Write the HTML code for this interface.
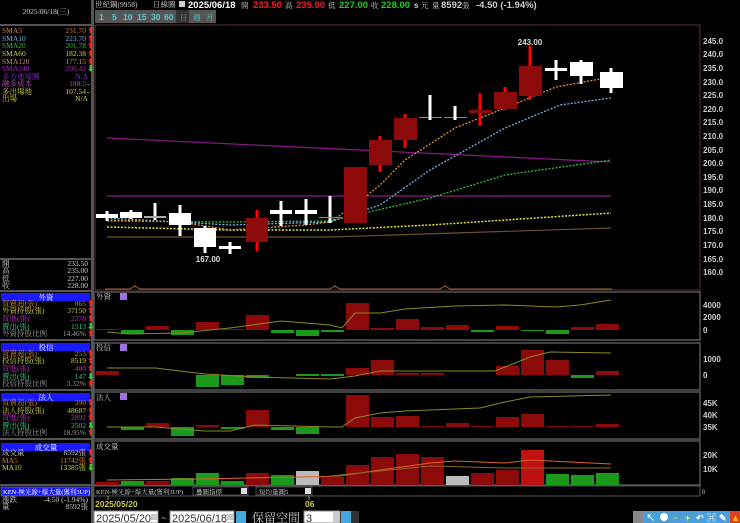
<!DOCTYPE html>
<html><head><meta charset="utf-8"><style>
html,body{margin:0;padding:0;background:#000;width:740px;height:523px;overflow:hidden}
svg{display:block}
text{font-family:"Liberation Sans","Noto Sans CJK TC",sans-serif}
.s{font-family:"Liberation Serif","Noto Serif CJK SC","Noto Sans CJK TC",serif;font-size:7.5px}
</style></head><body>
<svg width="740" height="523" viewBox="0 0 740 523" xmlns="http://www.w3.org/2000/svg">
<rect width="740" height="523" fill="#000"/>
<!-- left panel -->
<rect x="91" y="0" width="3" height="523" fill="#555"/>
<text x="46" y="14" fill="#ccc" class="s" text-anchor="middle">2025/06/18(三)</text>
<line x1="0" y1="25" x2="91" y2="25" stroke="#555" stroke-width="2"/>
<g class="s">
<text x="2" y="33" fill="#d08030" class="s">SMA5</text><text x="86" y="33" fill="#d08030" class="s" text-anchor="end">231.70</text><text x="87" y="33" fill="#f22" class="s">⬆</text>
<text x="2" y="41" fill="#70b0e0" class="s">SMA10</text><text x="86" y="41" fill="#70b0e0" class="s" text-anchor="end">223.70</text><text x="87" y="41" fill="#f22" class="s">⬆</text>
<text x="2" y="48" fill="#30c030" class="s">SMA20</text><text x="86" y="48" fill="#30c030" class="s" text-anchor="end">201.78</text><text x="87" y="48" fill="#f22" class="s">⬆</text>
<text x="2" y="56" fill="#d0d040" class="s">SMA60</text><text x="86" y="56" fill="#d0d040" class="s" text-anchor="end">182.38</text><text x="87" y="56" fill="#f22" class="s">⬆</text>
<text x="2" y="64" fill="#c09070" class="s">SMA120</text><text x="86" y="64" fill="#c09070" class="s" text-anchor="end">177.15</text><text x="87" y="64" fill="#f22" class="s">⬆</text>
<text x="2" y="71" fill="#b020c0" class="s">SMA240</text><text x="86" y="71" fill="#b020c0" class="s" text-anchor="end">200.42</text><text x="87" y="71" fill="#3c3" class="s">⬇</text>
<text x="2" y="79" fill="#8030c0" class="s">多方進場圖</text><text x="88" y="79" fill="#8030c0" class="s" text-anchor="end">N/A</text>
<text x="2" y="86" fill="#c050c0" class="s">融多成本</text><text x="86" y="86" fill="#c050c0" class="s" text-anchor="end">188.5</text><text x="87" y="86" fill="#ccc" class="s">-</text>
<text x="2" y="94" fill="#d0d040" class="s">多出場地</text><text x="86" y="94" fill="#d0d040" class="s" text-anchor="end">107.54</text><text x="87" y="94" fill="#ccc" class="s">-</text>
<text x="2" y="101" fill="#d0d040" class="s">出場</text><text x="88" y="101" fill="#d0d040" class="s" text-anchor="end">N/A</text>
</g>
<line x1="0" y1="259" x2="91" y2="259" stroke="#555" stroke-width="2"/>
<text x="2" y="266" fill="#ccc" class="s">開</text><text x="88" y="266" fill="#ccc" class="s" text-anchor="end">233.50</text>
<text x="2" y="273" fill="#ccc" class="s">高</text><text x="88" y="273" fill="#ccc" class="s" text-anchor="end">235.00</text>
<text x="2" y="281" fill="#ccc" class="s">低</text><text x="88" y="281" fill="#ccc" class="s" text-anchor="end">227.00</text>
<text x="2" y="288" fill="#ccc" class="s">收</text><text x="88" y="288" fill="#ccc" class="s" text-anchor="end">228.00</text>
<line x1="0" y1="291" x2="91" y2="291" stroke="#555" stroke-width="2"/>
<!-- sections -->
<rect x="1" y="293" width="89" height="8" fill="#1a1aff"/><text x="46" y="300" fill="#fff" class="s" text-anchor="middle">外資</text>
<text x="2" y="306" fill="#d08030" class="s">買賣超(張)</text><text x="86" y="306" fill="#d08030" class="s" text-anchor="end">865</text><text x="87" y="306" fill="#f22" class="s">⬆</text>
<text x="2" y="313" fill="#d0d040" class="s">外資持股(張)</text><text x="86" y="313" fill="#d0d040" class="s" text-anchor="end">37150</text><text x="87" y="313" fill="#f22" class="s">⬆</text>
<text x="2" y="321" fill="#c030c0" class="s">買進(張)</text><text x="86" y="321" fill="#c030c0" class="s" text-anchor="end">2378</text><text x="87" y="321" fill="#f22" class="s">⬆</text>
<text x="2" y="329" fill="#3c8" class="s">賣出(張)</text><text x="86" y="329" fill="#3c8" class="s" text-anchor="end">1513</text><text x="87" y="329" fill="#3c3" class="s">⬇</text>
<text x="2" y="336" fill="#999" class="s">外資持股比例</text><text x="86" y="336" fill="#999" class="s" text-anchor="end">14.46%</text><text x="87" y="336" fill="#f22" class="s">⬆</text>
<line x1="0" y1="340" x2="91" y2="340" stroke="#555" stroke-width="2"/>
<rect x="1" y="343" width="89" height="8" fill="#1a1aff"/><text x="46" y="350" fill="#fff" class="s" text-anchor="middle">投信</text>
<text x="2" y="356" fill="#d08030" class="s">買賣超(張)</text><text x="86" y="356" fill="#d08030" class="s" text-anchor="end">253</text><text x="87" y="356" fill="#f22" class="s">⬆</text>
<text x="2" y="363" fill="#d0d040" class="s">投信持股(張)</text><text x="86" y="363" fill="#d0d040" class="s" text-anchor="end">8519</text><text x="87" y="363" fill="#f22" class="s">⬆</text>
<text x="2" y="371" fill="#c030c0" class="s">買進(張)</text><text x="86" y="371" fill="#c030c0" class="s" text-anchor="end">400</text><text x="87" y="371" fill="#f22" class="s">⬆</text>
<text x="2" y="379" fill="#3c8" class="s">賣出(張)</text><text x="86" y="379" fill="#3c8" class="s" text-anchor="end">147</text><text x="87" y="379" fill="#3c3" class="s">⬇</text>
<text x="2" y="386" fill="#999" class="s">投信持股比例</text><text x="86" y="386" fill="#999" class="s" text-anchor="end">3.32%</text><text x="87" y="386" fill="#f22" class="s">⬆</text>
<line x1="0" y1="390" x2="91" y2="390" stroke="#555" stroke-width="2"/>
<rect x="1" y="393" width="89" height="8" fill="#1a1aff"/><text x="46" y="400" fill="#fff" class="s" text-anchor="middle">法人</text>
<text x="2" y="405" fill="#d08030" class="s">買賣超(張)</text><text x="86" y="405" fill="#d08030" class="s" text-anchor="end">390</text><text x="87" y="405" fill="#f22" class="s">⬆</text>
<text x="2" y="413" fill="#d0d040" class="s">法人持股(張)</text><text x="86" y="413" fill="#d0d040" class="s" text-anchor="end">48687</text><text x="87" y="413" fill="#f22" class="s">⬆</text>
<text x="2" y="420" fill="#c030c0" class="s">買進(張)</text><text x="86" y="420" fill="#c030c0" class="s" text-anchor="end">2892</text><text x="87" y="420" fill="#f22" class="s">⬆</text>
<text x="2" y="428" fill="#3c8" class="s">賣出(張)</text><text x="86" y="428" fill="#3c8" class="s" text-anchor="end">2502</text><text x="87" y="428" fill="#3c3" class="s">⬇</text>
<text x="2" y="435" fill="#999" class="s">法人持股比例</text><text x="86" y="435" fill="#999" class="s" text-anchor="end">18.95%</text><text x="87" y="435" fill="#f22" class="s">⬆</text>
<line x1="0" y1="439" x2="91" y2="439" stroke="#555" stroke-width="2"/>
<rect x="1" y="443" width="89" height="8" fill="#1a1aff"/><text x="46" y="450" fill="#fff" class="s" text-anchor="middle">成交量</text>
<text x="2" y="455" fill="#ccc" class="s">成交量</text><text x="86" y="455" fill="#ccc" class="s" text-anchor="end">8592張</text><text x="87" y="455" fill="#f22" class="s">⬆</text>
<text x="2" y="463" fill="#d08030" class="s">MA5</text><text x="86" y="463" fill="#d08030" class="s" text-anchor="end">11742張</text><text x="87" y="463" fill="#f22" class="s">⬆</text>
<text x="2" y="470" fill="#d0d040" class="s">MA10</text><text x="86" y="470" fill="#d0d040" class="s" text-anchor="end">13385張</text><text x="87" y="470" fill="#3c3" class="s">⬇</text>
<rect x="0" y="484" width="91" height="2" fill="#555"/>
<rect x="1" y="487" width="89" height="9" fill="#1a1aff" stroke="#88f" stroke-width="0.5"/><text x="3" y="494" fill="#fff" class="s" style="font-size:6.5px">KEN-極光線+爆大量(獲利3UP)</text>
<text x="2" y="502" fill="#ccc" class="s">漲跌</text><text x="88" y="502" fill="#ccc" class="s" text-anchor="end">-4.50 (-1.94%)</text>
<text x="2" y="509" fill="#ccc" class="s">量</text><text x="88" y="509" fill="#ccc" class="s" text-anchor="end">8592張</text>

<!-- top bar -->
<text x="95" y="7" fill="#ccc" class="s">世紀鋼(9958)</text>
<text x="153" y="7" fill="#ccc" class="s">日線圖</text>
<rect x="179" y="1" width="6" height="6" fill="#ccc"/>
<text x="188" y="8" fill="#fff" font-size="9.5" font-weight="bold">2025/06/18</text>
<text x="241" y="8" fill="#ccc" class="s">開</text><text x="253" y="8" fill="#e22" font-size="9.5" font-weight="bold">233.50</text>
<text x="285" y="8" fill="#ccc" class="s">高</text><text x="296" y="8" fill="#e22" font-size="9.5" font-weight="bold">235.00</text>
<text x="328" y="8" fill="#ccc" class="s">低</text><text x="339" y="8" fill="#2c2" font-size="9.5" font-weight="bold">227.00</text>
<text x="371" y="8" fill="#ccc" class="s">收</text><text x="381" y="8" fill="#2c2" font-size="9.5" font-weight="bold">228.00</text>
<text x="414" y="8" fill="#ccc" font-size="8" font-weight="bold">s</text><text x="421" y="8" fill="#ccc" class="s">元</text>
<text x="432" y="8" fill="#ccc" class="s">量</text><text x="441" y="8" fill="#ccc" font-size="9.5" font-weight="bold">8592</text><text x="462" y="8" fill="#ccc" class="s">張</text>
<text x="476" y="8" fill="#ccc" font-size="9.5" font-weight="bold">-4.50 (-1.94%)</text>
<rect x="95" y="10" width="121" height="13" fill="#555"/>
<rect x="176" y="10" width="13" height="13" fill="#333"/>
<g fill="#5cd" font-size="8.5" font-weight="bold">
<text x="99" y="20">1</text><text x="112" y="20">5</text><text x="123" y="20">10</text><text x="137" y="20">15</text><text x="151" y="20">30</text><text x="164" y="20">60</text>
</g>
<text x="180" y="20" fill="#888" class="s">日</text><text x="193" y="20" fill="#5cd" class="s">週</text><text x="206" y="20" fill="#5cd" class="s">月</text>

<!-- main chart frame -->
<rect x="95" y="25" width="605" height="265" fill="none" stroke="#533" stroke-width="1"/>
<g fill="#ccc" font-size="8" font-weight="bold">
<text x="703" y="44">245.0</text><text x="703" y="57">240.0</text><text x="703" y="71">235.0</text><text x="703" y="85">230.0</text><text x="703" y="98">225.0</text><text x="703" y="112">220.0</text><text x="703" y="125">215.0</text><text x="703" y="139">210.0</text><text x="703" y="153">205.0</text><text x="703" y="166">200.0</text><text x="703" y="180">195.0</text><text x="703" y="193">190.0</text><text x="703" y="207">185.0</text><text x="703" y="221">180.0</text><text x="703" y="234">175.0</text><text x="703" y="248">170.0</text><text x="703" y="262">165.0</text><text x="703" y="275">160.0</text>
</g>
<!-- lines -->
<polyline points="107,138 611,162" stroke="#8a1a8a" stroke-width="1.2" fill="none"/>
<line x1="107" y1="196" x2="611" y2="196" stroke="#8a1a8a" stroke-width="1.2"/>
<polyline points="107,237 330,237 611,228" stroke="#6a5030" stroke-width="1.2" fill="none"/>
<polyline points="107,227 230,230 330,230 430,225 611,213" stroke="#e0e030" stroke-width="1.5" stroke-dasharray="2,1.5" fill="none"/>
<polyline points="107,221 230,222 330,221 430,198 505,175 611,160" stroke="#30c030" stroke-width="1.3" stroke-dasharray="2,1.5" fill="none"/>
<polyline points="107,218 230,225 330,222 380,205 430,170 505,128 560,105 611,98" stroke="#70b0e0" stroke-width="1.3" stroke-dasharray="2,1.5" fill="none"/>
<polyline points="107,220 180,222 230,230 305,225 330,222 355,205 380,185 405,160 455,128 505,108 556,87 611,77" stroke="#e09030" stroke-width="1.3" stroke-dasharray="2,1.5" fill="none"/>
<!-- candles -->
<g>
<rect x="105.5" y="211" width="3" height="10" fill="#fff"/><rect x="96" y="214" width="22" height="4" fill="#fff"/>
<rect x="129.5" y="210" width="3" height="9" fill="#fff"/><rect x="120" y="212" width="22" height="6" fill="#fff"/>
<rect x="153.5" y="203" width="3" height="17" fill="#fff"/><rect x="144" y="216" width="22" height="2" fill="#aaa"/>
<rect x="178.5" y="205" width="3" height="31" fill="#fff"/><rect x="169" y="213" width="22" height="12" fill="#fff"/>
<rect x="203.5" y="226" width="3" height="27" fill="#fff"/><rect x="194" y="228" width="22" height="19" fill="#fff"/>
<rect x="228.5" y="242" width="3" height="12" fill="#fff"/><rect x="219" y="246" width="22" height="3" fill="#fff"/>
<rect x="255.5" y="210" width="3" height="41" fill="#f00"/><rect x="246" y="218" width="22" height="24" fill="#8c0a0a"/>
<rect x="279.5" y="201" width="3" height="25" fill="#fff"/><rect x="270" y="210" width="22" height="4" fill="#fff"/>
<rect x="304.5" y="199" width="3" height="26" fill="#fff"/><rect x="295" y="210" width="22" height="4" fill="#fff"/>
<rect x="328.5" y="196" width="3" height="27" fill="#fff"/><rect x="319" y="217" width="22" height="1" fill="#888"/>
<rect x="344" y="167" width="23" height="56" fill="#8c0a0a"/>
<rect x="378.5" y="136" width="3" height="36" fill="#f00"/><rect x="369" y="140" width="23" height="25" fill="#8c0a0a"/>
<rect x="403.5" y="114" width="3" height="34" fill="#f00"/><rect x="394" y="118" width="23" height="22" fill="#8c0a0a"/>
<rect x="419" y="117" width="23" height="1" fill="#888"/><rect x="428.5" y="95" width="3" height="25" fill="#fff"/>
<rect x="444" y="117" width="23" height="1" fill="#888"/><rect x="453.5" y="106" width="3" height="14" fill="#fff"/>
<rect x="478.5" y="93" width="3" height="33" fill="#f00"/><rect x="469" y="110" width="23" height="3" fill="#8c0a0a"/>
<rect x="503.5" y="87" width="3" height="23" fill="#f00"/><rect x="494" y="92" width="23" height="17" fill="#8c0a0a"/>
<rect x="528.5" y="46" width="3" height="54" fill="#f00"/><rect x="519" y="66" width="23" height="30" fill="#8c0a0a"/>
<rect x="554.5" y="60" width="3" height="20" fill="#fff"/><rect x="545" y="68" width="22" height="3" fill="#fff"/>
<rect x="579.5" y="60" width="3" height="24" fill="#fff"/><rect x="570" y="62" width="23" height="14" fill="#fff"/>
<rect x="609.5" y="68" width="3" height="25" fill="#fff"/><rect x="600" y="72" width="23" height="16" fill="#fff"/>
</g>
<text x="530" y="45" fill="#ddd" font-size="8" font-weight="bold" text-anchor="middle">243.00</text>
<text x="208" y="262" fill="#ddd" font-size="8" font-weight="bold" text-anchor="middle">167.00</text>
<polyline points="105,289 130,289 135,286 140,289 330,289 335,286 340,289 440,289 445,286 450,289 612,289" stroke="#a06040" stroke-width="1" fill="none"/>

<!-- sub panels -->
<g fill="none" stroke="#555" stroke-width="1.5">
<rect x="94" y="292" width="606" height="48"/>
<rect x="94" y="343" width="606" height="47"/>
<rect x="94" y="392" width="606" height="47"/>
<rect x="94" y="441" width="606" height="44"/>
</g>
<g fill="#ccc" font-size="8" font-weight="bold">
<text x="703" y="308">4000</text><text x="703" y="320">2000</text><text x="703" y="333">0</text>
<text x="703" y="362">1000</text><text x="703" y="378">0</text>
<text x="703" y="406">45K</text><text x="703" y="418">40K</text><text x="703" y="430">35K</text>
<text x="703" y="458">20K</text><text x="703" y="472">10K</text>
</g>
<text x="96" y="299" fill="#ccc" class="s">外資</text><rect x="120" y="293" width="7" height="7" fill="#a070e0"/>
<text x="96" y="350" fill="#ccc" class="s">投信</text><rect x="120" y="344" width="7" height="7" fill="#a070e0"/>
<text x="96" y="400" fill="#ccc" class="s">法人</text><rect x="120" y="393" width="7" height="7" fill="#a070e0"/>
<text x="96" y="449" fill="#ccc" class="s">成交量</text>
<!-- panel1 bars baseline 330 -->
<g>
<rect x="96" y="329" width="23" height="1" fill="#8c0a0a"/>
<rect x="121" y="330" width="23" height="4" fill="#1a9a1a"/>
<rect x="146" y="326" width="23" height="4" fill="#8c0a0a"/>
<rect x="171" y="330" width="23" height="5" fill="#1a9a1a"/>
<rect x="196" y="322" width="23" height="8" fill="#8c0a0a"/>
<rect x="221" y="329" width="23" height="1" fill="#8c0a0a"/>
<rect x="246" y="315" width="23" height="15" fill="#8c0a0a"/>
<rect x="271" y="330" width="23" height="3" fill="#1a9a1a"/>
<rect x="296" y="330" width="23" height="6" fill="#1a9a1a"/>
<rect x="321" y="330" width="23" height="2" fill="#1a9a1a"/>
<rect x="346" y="303" width="23" height="27" fill="#8c0a0a"/>
<rect x="371" y="328" width="23" height="2" fill="#8c0a0a"/>
<rect x="396" y="319" width="23" height="11" fill="#8c0a0a"/>
<rect x="421" y="327" width="23" height="3" fill="#8c0a0a"/>
<rect x="446" y="325" width="23" height="5" fill="#8c0a0a"/>
<rect x="471" y="330" width="23" height="2" fill="#1a9a1a"/>
<rect x="496" y="326" width="23" height="4" fill="#8c0a0a"/>
<rect x="521" y="330" width="23" height="1" fill="#1a9a1a"/>
<rect x="546" y="330" width="23" height="4" fill="#1a9a1a"/>
<rect x="571" y="327" width="23" height="3" fill="#8c0a0a"/>
<rect x="596" y="324" width="23" height="6" fill="#8c0a0a"/>
</g>
<polyline points="107,332 130,334 180,333 230,328 281,321 330,325 342,328 355,313 380,313 405,309 455,306 505,305 556,307 580,305 611,300" stroke="#8a8a20" stroke-width="1" fill="none"/>
<!-- panel2 baseline 375 -->
<g>
<rect x="96" y="371" width="23" height="4" fill="#8c0a0a"/>
<rect x="196" y="375" width="23" height="12" fill="#1a9a1a"/>
<rect x="221" y="375" width="23" height="10" fill="#1a9a1a"/>
<rect x="246" y="375" width="23" height="3" fill="#1a9a1a"/>
<rect x="296" y="374" width="23" height="2" fill="#1a9a1a"/>
<rect x="321" y="374" width="23" height="2" fill="#1a9a1a"/>
<rect x="346" y="368" width="23" height="7" fill="#8c0a0a"/>
<rect x="371" y="360" width="23" height="15" fill="#8c0a0a"/>
<rect x="396" y="373" width="23" height="2" fill="#8c0a0a"/>
<rect x="421" y="373" width="23" height="2" fill="#8c0a0a"/>
<rect x="496" y="366" width="23" height="9" fill="#8c0a0a"/>
<rect x="521" y="350" width="23" height="25" fill="#8c0a0a"/>
<rect x="546" y="360" width="23" height="15" fill="#8c0a0a"/>
<rect x="571" y="375" width="23" height="3" fill="#1a9a1a"/>
<rect x="596" y="371" width="23" height="4" fill="#8c0a0a"/>
</g>
<polyline points="107,368 155,368 205,374 255,377 330,379 355,376 380,371 455,371 495,371 505,367 530,357 550,352 611,353" stroke="#8a8a20" stroke-width="1" fill="none"/>
<!-- panel3 baseline 427 -->
<g>
<rect x="121" y="427" width="23" height="3" fill="#1a9a1a"/>
<rect x="146" y="423" width="23" height="4" fill="#8c0a0a"/>
<rect x="171" y="427" width="23" height="9" fill="#1a9a1a"/>
<rect x="196" y="425" width="23" height="2" fill="#8c0a0a"/>
<rect x="221" y="427" width="23" height="2" fill="#1a9a1a"/>
<rect x="246" y="410" width="23" height="17" fill="#8c0a0a"/>
<rect x="271" y="427" width="23" height="3" fill="#1a9a1a"/>
<rect x="296" y="427" width="23" height="7" fill="#1a9a1a"/>
<rect x="346" y="395" width="23" height="32" fill="#8c0a0a"/>
<rect x="371" y="417" width="23" height="10" fill="#8c0a0a"/>
<rect x="396" y="416" width="23" height="11" fill="#8c0a0a"/>
<rect x="421" y="426" width="23" height="1" fill="#8c0a0a"/>
<rect x="446" y="423" width="23" height="4" fill="#8c0a0a"/>
<rect x="471" y="426" width="23" height="1" fill="#8c0a0a"/>
<rect x="496" y="417" width="23" height="10" fill="#8c0a0a"/>
<rect x="521" y="414" width="23" height="13" fill="#8c0a0a"/>
<rect x="546" y="426" width="23" height="1" fill="#8c0a0a"/>
<rect x="571" y="426" width="23" height="1" fill="#8c0a0a"/>
<rect x="596" y="424" width="23" height="3" fill="#8c0a0a"/>
</g>
<polyline points="107,427 155,427 205,431 230,431 255,425 330,427 342,427 355,418 380,413 405,411 455,409 480,408 505,402 530,397 611,395" stroke="#8a8a20" stroke-width="1" fill="none"/>
<!-- panel4 baseline 485 -->
<g>
<rect x="96" y="482" width="23" height="3" fill="#8c0a0a"/>
<rect x="121" y="481" width="23" height="4" fill="#1a9a1a"/>
<rect x="146" y="481" width="23" height="4" fill="#8c0a0a"/>
<rect x="171" y="478" width="23" height="7" fill="#1a9a1a"/>
<rect x="196" y="473" width="23" height="12" fill="#1a9a1a"/>
<rect x="221" y="481" width="23" height="4" fill="#1a9a1a"/>
<rect x="246" y="473" width="23" height="12" fill="#8c0a0a"/>
<rect x="271" y="475" width="23" height="10" fill="#1a9a1a"/>
<rect x="296" y="471" width="23" height="14" fill="#bbb"/>
<rect x="321" y="477" width="23" height="8" fill="#8c0a0a"/>
<rect x="346" y="465" width="23" height="20" fill="#8c0a0a"/>
<rect x="371" y="457" width="23" height="28" fill="#8c0a0a"/>
<rect x="396" y="454" width="23" height="31" fill="#8c0a0a"/>
<rect x="421" y="457" width="23" height="28" fill="#8c0a0a"/>
<rect x="446" y="476" width="23" height="9" fill="#bbb"/>
<rect x="471" y="473" width="23" height="12" fill="#8c0a0a"/>
<rect x="496" y="470" width="23" height="15" fill="#8c0a0a"/>
<rect x="521" y="450" width="23" height="35" fill="#c01010"/>
<rect x="546" y="474" width="23" height="11" fill="#1a9a1a"/>
<rect x="571" y="475" width="23" height="10" fill="#1a9a1a"/>
<rect x="596" y="473" width="23" height="12" fill="#1a9a1a"/>
</g>
<polyline points="107,480 200,479 300,477 340,476 380,470 430,463 455,461 505,463 530,460 611,464" stroke="#e06020" stroke-width="1" fill="none"/>
<polyline points="330,476 430,466 505,468 611,468" stroke="#8a6a20" stroke-width="1" fill="none"/>

<!-- bottom bar -->
<rect x="94" y="486" width="606" height="10" fill="#000" stroke="#555" stroke-width="1"/>
<text x="96" y="494" fill="#ccc" class="s" style="font-size:6.5px">KEN-極光線+爆大量(獲利3UP)</text>
<rect x="193" y="487" width="55" height="8" fill="#000" stroke="#777" stroke-width="0.6"/><text x="196" y="494" fill="#ccc" class="s" style="font-size:6.5px">疊圖指標</text><rect x="241" y="488" width="6" height="6" fill="#ddd"/>
<rect x="256" y="487" width="56" height="8" fill="#000" stroke="#777" stroke-width="0.6"/><text x="259" y="494" fill="#ccc" class="s" style="font-size:6.5px">短均量圖5</text><rect x="305" y="488" width="6" height="6" fill="#ddd"/>
<text x="702" y="494" fill="#ccc" font-size="6">0</text>
<line x1="108" y1="496" x2="108" y2="500" stroke="#cc4" stroke-width="0.8"/>
<line x1="309" y1="496" x2="309" y2="500" stroke="#cc4" stroke-width="0.8"/>
<text x="95" y="507" fill="#cc4" font-size="8.5" font-weight="bold">2025/05/20</text>
<text x="305" y="507" fill="#cc4" font-size="8.5" font-weight="bold">06</text>
<rect x="94" y="511" width="64" height="12" fill="#fff" stroke="#888"/><text x="96" y="522" fill="#333" font-size="11" font-family="Liberation Serif">2025/05/20</text><rect x="151" y="514" width="6" height="6" fill="#ccc"/>
<text x="161" y="521" fill="#ccc" font-size="9">~</text>
<rect x="170" y="511" width="64" height="12" fill="#fff" stroke="#888"/><text x="172" y="522" fill="#333" font-size="11" font-family="Liberation Serif">2025/06/18</text><rect x="227" y="514" width="6" height="6" fill="#ccc"/>
<rect x="236" y="511" width="10" height="12" fill="#4ad"/>
<text x="252" y="522" fill="#ccc" font-size="12" class="s" style="font-size:12px">保留空間</text>
<rect x="304" y="511" width="36" height="12" fill="#fff" stroke="#888"/><text x="306" y="522" fill="#333" font-size="11" font-family="Liberation Serif">3</text>
<rect x="333" y="512" width="6" height="10" fill="#ccc"/>
<rect x="341" y="511" width="10" height="12" fill="#4ad"/><rect x="351" y="511" width="8" height="12" fill="#333"/>
<rect x="633" y="511" width="10" height="12" fill="#888"/>
<rect x="643" y="511" width="97" height="12" fill="#4a9fd8"/>
<g fill="#fff" font-size="9" font-weight="bold">
<text x="646" y="521">↖</text><circle cx="664" cy="517" r="4" fill="#fff"/><text x="673" y="521" fill="#cc4">−</text><text x="685" y="521" fill="#ff0">+</text><text x="696" y="521">↶</text><text x="707" y="521">⌘</text><text x="719" y="521">✎</text>
</g>
<rect x="730" y="511" width="10" height="12" fill="#e04020"/><text x="731" y="521" fill="#fc0" font-size="9">▲</text>
</svg>
</body></html>
